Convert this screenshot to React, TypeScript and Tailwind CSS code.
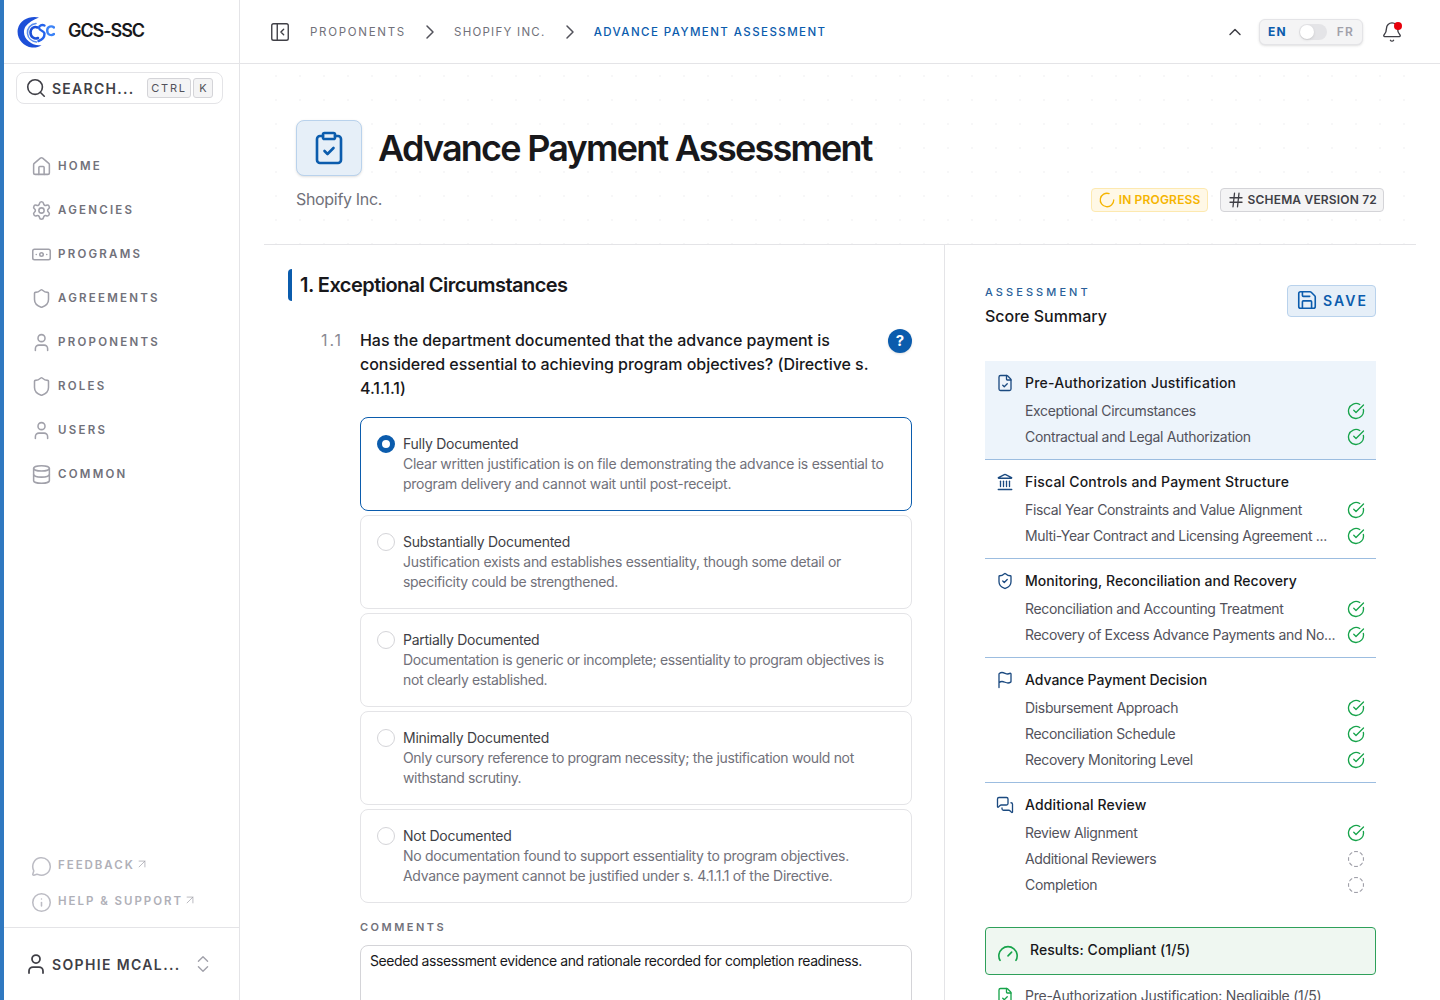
import React from "react";
import {
  Search, House, Settings, Banknote, Shield, User, Database, MessageCircle, Info, ChevronsUpDown,
  PanelLeftClose, ChevronRight, ChevronUp, Bell, ClipboardCheck, LoaderCircle, Hash, Save, FileCheck,
  Landmark, ShieldCheck, Flag, MessagesSquare, CircleCheckBig, CircleDashed, Gauge, ArrowUpRight,
} from "lucide-react";

const nav = [
  [House, "HOME"], [Settings, "AGENCIES"], [Banknote, "PROGRAMS"], [Shield, "AGREEMENTS"],
  [User, "PROPONENTS"], [Shield, "ROLES"], [User, "USERS"], [Database, "COMMON"],
] as const;

const options = [
  { t: "Fully Documented", d: "Clear written justification is on file demonstrating the advance is essential to program delivery and cannot wait until post-receipt.", c: "tracking-[-0.02em]" },
  { t: "Substantially Documented", d: "Justification exists and establishes essentiality, though some detail or specificity could be strengthened.", c: "tracking-[-0.022em]" },
  { t: "Partially Documented", d: "Documentation is generic or incomplete; essentiality to program objectives is not clearly established.", c: "tracking-[-0.027em]" },
  { t: "Minimally Documented", d: "Only cursory reference to program necessity; the justification would not withstand scrutiny.", c: "tracking-[-0.024em]" },
  { t: "Not Documented", d: "No documentation found to support essentiality to program objectives. Advance payment cannot be justified under s. 4.1.1.1 of the Directive.", c: "tracking-[-0.022em]" },
];

const groups = [
  { icon: FileCheck, title: "Pre-Authorization Justification", tr: "tracking-[0.015em]", active: true, items: [["Exceptional Circumstances", 1], ["Contractual and Legal Authorization", 1]] },
  { icon: Landmark, title: "Fiscal Controls and Payment Structure", tr: "tracking-[0.015em]", items: [["Fiscal Year Constraints and Value Alignment", 1], ["Multi-Year Contract and Licensing Agreement ...", 1]] },
  { icon: ShieldCheck, title: "Monitoring, Reconciliation and Recovery", tr: "tracking-[0.004em]", items: [["Reconciliation and Accounting Treatment", 1], ["Recovery of Excess Advance Payments and No...", 1]] },
  { icon: Flag, title: "Advance Payment Decision", tr: "tracking-[-0.003em]", items: [["Disbursement Approach", 1], ["Reconciliation Schedule", 1], ["Recovery Monitoring Level", 1]] },
  { icon: MessagesSquare, title: "Additional Review", tr: "tracking-[0.01em]", last: true, items: [["Review Alignment", 1], ["Additional Reviewers", 0], ["Completion", 0]] },
] as { icon: any; title: string; tr: string; active?: boolean; last?: boolean; items: [string, number][] }[];

function Logo() {
  return (
    <svg width="38" height="32" viewBox="0 0 38 32" fill="none" className="shrink-0">
      <path d="M22 1.500C13-.5 3 3.500.8 13 -.8 22 6 30.500 15 31.500c3.500.3 7-.5 9.500-2.500-4.500.8-9.500-.5-12.500-3.500C7 22 5.500 15.500 8.500 10.500 11.500 6.500 16.500 3.500 22 1.500Z" fill="#1d4fd8" />
      <path d="M19 7.500c-5.500.5-9 5-8.500 10 .5 4.500 4 8 9 8.500" stroke="#5b8def" strokeWidth="1.600" strokeLinecap="round" />
      <path d="M20.500 11.500c-3-1.500-7 .5-7 5s4 7 7.500 5.500" stroke="#1d4fd8" strokeWidth="2.600" strokeLinecap="round" />
      <path d="M27.500 9.500c-2.500-1.200-5.500-.2-5.500 2.300 0 3.200 5.500 2.700 5.500 6 0 3.500-2.800 6.200-6 7.200" stroke="#2563eb" strokeWidth="2.400" strokeLinecap="round" />
      <path d="M37 11.500c-2.200-2-6.800-1.500-6.800 3 0 4.500 4.300 5.700 6.800 3.500" stroke="#3b82f6" strokeWidth="2.400" strokeLinecap="round" />
    </svg>
  );
}

function Sidebar() {
  return (
    <aside className="w-[240px] h-full shrink-0 flex flex-col border-l-4 border-r border-l-[#2f78c0] border-r-[#e4e4e7] bg-white">
      <div className="h-[64px] shrink-0 flex items-center pl-[13px] border-b border-[#e4e4e7]">
        <Logo />
        <span className="ml-[13px] -mt-[2px] text-[18px] font-semibold text-[#18181b] tracking-[-0.06em]">GCS-SSC</span>
      </div>
      <div className="ml-[12px] mt-2 w-[207px] h-[32px] shrink-0 flex items-center pl-[8px] pr-[9px] rounded-lg border border-[#e4e4e7]">
        <Search size={22} strokeWidth={1.75} className="text-[#3f3f46] shrink-0" />
        <span className="ml-[5px] text-[14px] font-semibold tracking-[0.09em] text-[#3f3f46]">SEARCH...</span>
        <span className="ml-auto flex gap-[2px]">
          <kbd className="h-[20px] w-[44px] flex items-center justify-center rounded-[3px] border border-[#d4d4d8] bg-[#f4f4f5] text-[11px] tracking-[0.16em] text-[#52525b] font-[Inter,sans-serif]">CTRL</kbd>
          <kbd className="h-[20px] w-[20px] flex items-center justify-center rounded-[3px] border border-[#d4d4d8] bg-[#f4f4f5] text-[11px] text-[#52525b] font-[Inter,sans-serif]">K</kbd>
        </span>
      </div>
      <nav className="mt-[52px] flex flex-col gap-[24px] pl-[27px]">
        {nav.map(([Icon, label]) => (
          <div key={label} className="h-[20px] flex items-center gap-[6px]">
            <Icon size={21} strokeWidth={1.75} className="text-[#a1a1aa] shrink-0" />
            <span className="pt-[2px] text-[11.500px] font-semibold tracking-[0.195em] text-[#71717a]">{label}</span>
          </div>
        ))}
      </nav>
      <div className="mt-auto flex flex-col gap-[16px] pl-[27px] pb-[15px]">
        {([[MessageCircle, "FEEDBACK"], [Info, "HELP & SUPPORT"]] as const).map(([Icon, label]) => (
          <div key={label} className="h-[20px] flex items-center gap-[6px]">
            <Icon size={21} strokeWidth={1.75} className="text-[#bcbcc4] shrink-0" />
            <span className="text-[11.500px] font-semibold tracking-[0.17em] text-[#b0b0b8]">{label}</span>
            <ArrowUpRight size={14} strokeWidth={1.25} className="text-[#a1a1aa] -ml-[6px] -mt-[4px]" />
          </div>
        ))}
      </div>
      <div className="h-[73px] shrink-0 border-t border-[#e4e4e7] flex items-center pl-[20px] pr-[25px]">
        <User size={24} strokeWidth={1.75} className="text-[#3f3f46] shrink-0" />
        <span className="ml-[4px] text-[14px] font-semibold tracking-[0.097em] text-[#3f3f46]">SOPHIE MCAL...</span>
        <ChevronsUpDown size={22} strokeWidth={1.5} className="ml-auto text-[#a1a1aa]" />
      </div>
    </aside>
  );
}

function Topbar() {
  return (
    <header className="h-[64px] shrink-0 flex items-center pl-[29px] pr-[37px] border-b border-[#e4e4e7]">
      <PanelLeftClose size={22} strokeWidth={1.5} className="text-[#3f3f46] shrink-0" />
      <span className="ml-[19px] pt-[2px] text-[11.500px] tracking-[0.15em] text-[#71717a]">PROPONENTS</span>
      <ChevronRight size={24} strokeWidth={1.5} className="ml-[12px] text-[#52525b] shrink-0" />
      <span className="ml-[12px] pt-[2px] text-[11.500px] tracking-[0.11em] text-[#71717a]">SHOPIFY INC.</span>
      <ChevronRight size={24} strokeWidth={1.5} className="ml-[12px] text-[#52525b] shrink-0" />
      <span className="ml-[12px] pt-[2px] text-[11.500px] font-medium tracking-[0.125em] text-[#0b5cad]">ADVANCE PAYMENT ASSESSMENT</span>
      <ChevronUp size={20} strokeWidth={1.75} className="ml-auto text-[#3f3f46]" />
      <div className="ml-[14px] w-[104px] h-[26px] flex items-center px-[8px] rounded-md border border-[#e4e4e7] bg-[#f4f4f5] shadow-sm">
        <span className="text-[12px] font-bold tracking-[0.1em] text-[#0b5cad]">EN</span>
        <span className="ml-[12px] w-[28px] h-[16px] rounded-full bg-[#e4e4e7] flex items-center pl-[1px]">
          <span className="w-[14px] h-[14px] rounded-full bg-white shadow-sm" />
        </span>
        <span className="ml-auto text-[12px] font-semibold tracking-[0.1em] text-[#a1a1aa]">FR</span>
      </div>
      <div className="relative ml-[18px]">
        <Bell size={22} strokeWidth={1.5} className="text-[#3f3f46]" />
        <span className="absolute top-[1px] right-[1px] w-[8px] h-[8px] rounded-full bg-[#e7000b]" />
      </div>
    </header>
  );
}

function Heading() {
  return (
    <div className="px-[32px] pt-[56px] pb-[32px] border-b border-[#e4e4e7] bg-[radial-gradient(#f7f7f8_1px,transparent_1px)] bg-[size:24px_24px]">
      <div className="flex items-center">
        <div className="w-[66px] h-[56px] flex items-center justify-center rounded-lg border border-[#b9d2ec] bg-[#e6eff8] shadow-sm">
          <ClipboardCheck size={36} strokeWidth={1.75} className="text-[#0b5cad]" />
        </div>
        <h1 className="ml-[16px] text-[36px] leading-[40px] font-semibold tracking-[-0.049em] text-[#18181b]">Advance Payment Assessment</h1>
      </div>
      <div className="mt-[12px] flex items-center justify-between">
        <span className="-mt-[2px] text-[16px] tracking-[-0.02em] text-[#71717a]">Shopify Inc.</span>
        <div className="flex gap-[12px]">
          <span className="h-[24px] flex items-center gap-[3px] px-[6px] rounded border border-[#fde9b0] bg-[#fff8e6] text-[12px] font-semibold tracking-[0.015em] text-[#f5b400]">
            <LoaderCircle size={18} strokeWidth={1.75} />IN PROGRESS
          </span>
          <span className="h-[24px] flex items-center gap-[3px] px-[6px] rounded border border-[#d4d4d8] bg-[#f4f4f5] text-[12px] font-semibold tracking-[0.015em] text-[#3f3f46]">
            <Hash size={18} strokeWidth={1.75} />SCHEMA VERSION 72
          </span>
        </div>
      </div>
    </div>
  );
}

function Option({ title, desc, cls, selected }: { title: string; desc: string; cls: string; selected?: boolean }) {
  return (
    <div className={`flex gap-[8px] px-[16px] py-[16px] rounded-lg border ${selected ? "border-[#0b5cad]" : "border-[#e4e4e7]"}`}>
      {selected ? (
        <span className="mt-[1px] w-[18px] h-[18px] shrink-0 rounded-full border-[5px] border-[#0b5cad] bg-white" />
      ) : (
        <span className="mt-[1px] w-[18px] h-[18px] shrink-0 rounded-full border border-[#d4d4d8] bg-white" />
      )}
      <div className="min-w-0 text-[14px] leading-[20px]">
        <div className="text-[#3f3f46] tracking-[-0.018em]">{title}</div>
        <div className={`text-[#71717a] ${cls}`}>{desc}</div>
      </div>
    </div>
  );
}

function LeftColumn() {
  return (
    <section className="w-[681px] shrink-0 border-r border-[#e4e4e7] pl-[24px] pr-[32px] pt-[24px]">
      <div className="h-[32px] flex items-center border-l-4 border-[#0b5cad] rounded-sm pl-[8px]">
        <h2 className="text-[20px] font-semibold tracking-[-0.027em] text-[#18181b]">1. Exceptional Circumstances</h2>
      </div>
      <div className="mt-[27px] flex pl-[33px]">
        <span className="w-[39px] shrink-0 text-[16px] leading-[24px] tracking-[0.12em] text-[#8a8a93]">1.1</span>
        <p className="flex-1 text-[16px] leading-[24px] font-medium tracking-[-0.003em] text-[#18181b]">
          Has the department documented that the advance payment is considered essential to achieving program objectives? (Directive s. 4.1.1.1)
        </p>
        <span className="ml-[12px] mt-[1px] w-[24px] h-[24px] shrink-0 rounded-full bg-[#0b5cad] text-white text-[15px] font-bold flex items-center justify-center shadow-sm">?</span>
      </div>
      <div className="mt-[17px] ml-[72px] flex flex-col gap-[4px]">
        {options.map((o, i) => <Option key={o.t} title={o.t} desc={o.d} cls={o.c} selected={i === 0} />)}
      </div>
      <div className="ml-[72px] mt-[16px] text-[11px] leading-[16px] font-semibold tracking-[0.225em] text-[#71717a]">COMMENTS</div>
      <textarea
        readOnly
        rows={4}
        className="mt-[10px] ml-[72px] block w-[552px] h-[96px] resize-none rounded-lg border border-[#d4d4d8] px-[9px] py-[5px] text-[14px] leading-[20px] tracking-[-0.03em] text-[#18181b] outline-none"
        defaultValue="Seeded assessment evidence and rationale recorded for completion readiness."
      />
    </section>
  );
}

function RightColumn() {
  return (
    <section className="flex-1 min-w-0 pl-[40px] pr-[40px] pt-[40px]">
      <div className="flex items-start justify-between h-[76px]">
        <div>
          <div className="text-[11px] leading-[14px] font-medium tracking-[0.28em] text-[#2a5f9a]">ASSESSMENT</div>
          <div className="mt-[5px] text-[16px] leading-[24px] font-medium text-[#18181b]">Score Summary</div>
        </div>
        <div className="h-[32px] w-[89px] flex items-center gap-[5px] pl-[8px] pb-[2px] rounded border border-[#b9d2ec] bg-[#e6eff8] text-[14px] font-semibold tracking-[0.15em] text-[#0b5cad]">
          <Save size={22} strokeWidth={1.75} className="shrink-0" />SAVE
        </div>
      </div>
      <div>
        {groups.map((g) => (
          <div key={g.title} className={`pl-[11px] pr-[11px] pt-[12px] pb-[12px] ${g.active ? "bg-[#edf4fb]" : ""} ${g.last ? "" : "border-b border-[#9cbde0]"}`}>
            <div className="h-[20px] flex items-center gap-[11px]">
              <g.icon size={18} strokeWidth={1.75} className="text-[#1b4a80] shrink-0" />
              <span className={`text-[14px] leading-[20px] font-medium text-[#18181b] ${g.tr}`}>{g.title}</span>
            </div>
            <div className="mt-[8px] pl-[29px] flex flex-col gap-[6px]">
              {g.items.map(([t, done]) => (
                <div key={t} className="h-[20px] flex items-center gap-[9px]">
                  <span className="flex-1 min-w-0 truncate text-[14px] leading-[20px] tracking-[-0.024em] text-[#52525b]">{t}</span>
                  {done
                    ? <CircleCheckBig size={18} strokeWidth={1.75} className="text-[#16a34a] shrink-0" />
                    : <CircleDashed size={18} strokeWidth={1.5} className="text-[#a1a1aa] shrink-0" />}
                </div>
              ))}
            </div>
          </div>
        ))}
      </div>
      <div className="mt-[20px] h-[48px] flex items-center gap-[11px] px-[11px] rounded border border-[#2ea05a] bg-[#eff7f1]">
        <Gauge size={22} strokeWidth={1.75} className="text-[#16a34a] mt-[6px] shrink-0" />
        <span className="-mt-[4px] text-[14px] font-medium tracking-[0.005em] text-[#18181b]">Results: Compliant (1/5)</span>
      </div>
      <div className="mt-[11px] flex items-center gap-[11px] pl-[11px]">
        <FileCheck size={18} strokeWidth={1.75} className="text-[#16a34a] shrink-0" />
        <span className="text-[14px] leading-[20px] tracking-[-0.018em] text-[#52525b]">Pre-Authorization Justification: Negligible (1/5)</span>
      </div>
    </section>
  );
}

export default function App() {
  return (
    <div className="w-full h-[1000px] overflow-hidden flex bg-white font-[Inter,sans-serif]">
      <Sidebar />
      <main className="flex-1 min-w-0 flex flex-col">
        <Topbar />
        <div className="mx-[24px] flex-1 min-h-0 flex flex-col">
          <Heading />
          <div className="flex-1 min-h-0 flex">
            <LeftColumn />
            <RightColumn />
          </div>
        </div>
      </main>
    </div>
  );
}
